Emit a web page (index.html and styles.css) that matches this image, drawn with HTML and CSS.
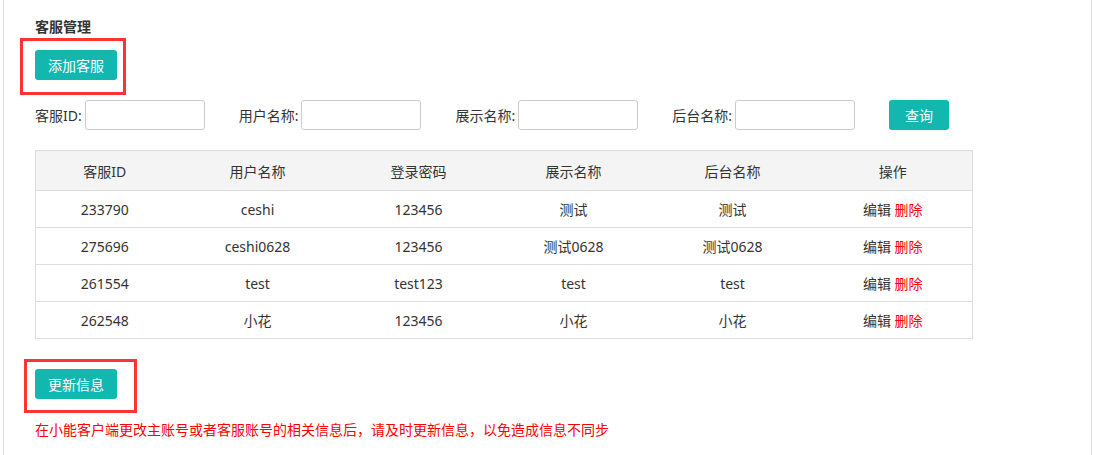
FILE: index.html
```html
<!DOCTYPE html>
<html lang="zh-CN">
<head>
  <meta charset="UTF-8">
  <title>客服管理</title>
  <link rel="stylesheet" href="styles.css">
</head>
<body>
  <div class="panel">
    <h3 class="title">客服管理</h3>

    <div class="mark mark-add">
      <button class="btn">添加客服</button>
    </div>

    <div class="search">
      <div class="field"><label>客服ID:</label><input type="text"></div>
      <div class="field"><label>用户名称:</label><input type="text"></div>
      <div class="field"><label>展示名称:</label><input type="text"></div>
      <div class="field"><label>后台名称:</label><input type="text"></div>
      <button class="btn btn-query">查询</button>
    </div>

    <table class="list">
      <colgroup>
        <col style="width:138px">
        <col style="width:168px">
        <col style="width:154px">
        <col style="width:156px">
        <col style="width:162px">
        <col style="width:159px">
      </colgroup>
      <thead>
        <tr>
          <th>客服ID</th>
          <th>用户名称</th>
          <th>登录密码</th>
          <th>展示名称</th>
          <th>后台名称</th>
          <th>操作</th>
        </tr>
      </thead>
      <tbody>
        <tr>
          <td>233790</td><td>ceshi</td><td>123456</td><td>测试</td><td>测试</td>
          <td><a class="edit">编辑</a> <a class="del">删除</a></td>
        </tr>
        <tr>
          <td>275696</td><td>ceshi0628</td><td>123456</td><td>测试0628</td><td>测试0628</td>
          <td><a class="edit">编辑</a> <a class="del">删除</a></td>
        </tr>
        <tr>
          <td>261554</td><td>test</td><td>test123</td><td>test</td><td>test</td>
          <td><a class="edit">编辑</a> <a class="del">删除</a></td>
        </tr>
        <tr>
          <td>262548</td><td>小花</td><td>123456</td><td>小花</td><td>小花</td>
          <td><a class="edit">编辑</a> <a class="del">删除</a></td>
        </tr>
      </tbody>
    </table>

    <div class="mark mark-update">
      <button class="btn">更新信息</button>
    </div>

    <p class="tip">在小能客户端更改主账号或者客服账号的相关信息后，请及时更新信息，以免造成信息不同步</p>
  </div>
</body>
</html>
```

FILE: styles.css
```css
* {
  margin: 0;
  padding: 0;
  box-sizing: border-box;
}

body {
  background: #fff;
  font-family: "Noto Sans", "Noto Sans CJK SC", sans-serif;
  font-size: 14px;
  color: #333;
}

.panel {
  margin: 0 2px 0 3px;
  min-height: 455px;
  border-left: 1px solid #ddd;
  border-right: 1px solid #ddd;
  padding: 17px 0 0 31px;
}

.title {
  font-size: 14px;
  font-weight: bold;
  line-height: 20px;
  color: #333;
}

.btn {
  display: block;
  width: 82px;
  height: 30px;
  border: none;
  border-radius: 3px;
  background: #12b7af;
  color: #fff;
  font-family: inherit;
  font-size: 14px;
  cursor: pointer;
}

/* red highlight boxes around the two buttons */
.mark {
  display: inline-block;
  border: 3px solid #f33;
}

.mark-add {
  margin: 1px 0 0 -15px;
  padding: 9px 6px 12px 12px;
  vertical-align: top;
}

.mark-update {
  margin: 20px 0 0 -11px;
  padding: 7px 17px 11px 8px;
  display: block;
  width: 113px;
}

.search {
  display: flex;
  align-items: center;
  margin-top: 5px;
}

.field {
  display: flex;
  align-items: center;
  margin-right: 34px;
}

.field label {
  margin-right: 3px;
  white-space: nowrap;
}

.field input {
  width: 120px;
  height: 30px;
  border: 1px solid #ccc;
  border-radius: 3px;
  outline: none;
}

.btn-query {
  width: 60px;
}

.list {
  margin-top: 20px;
  width: 937px;
  border-collapse: collapse;
  table-layout: fixed;
  border: 1px solid #ddd;
}

.list th {
  height: 40px;
  background: #f4f4f4;
  font-weight: normal;
  border-bottom: 1px solid #ddd;
}

.list td {
  height: 37px;
  text-align: center;
  border-bottom: 1px solid #ddd;
}

.edit {
  color: #333;
}

.del {
  color: #f00;
}

.tip {
  margin-top: 7px;
  line-height: 20px;
  color: #f00;
}
```
